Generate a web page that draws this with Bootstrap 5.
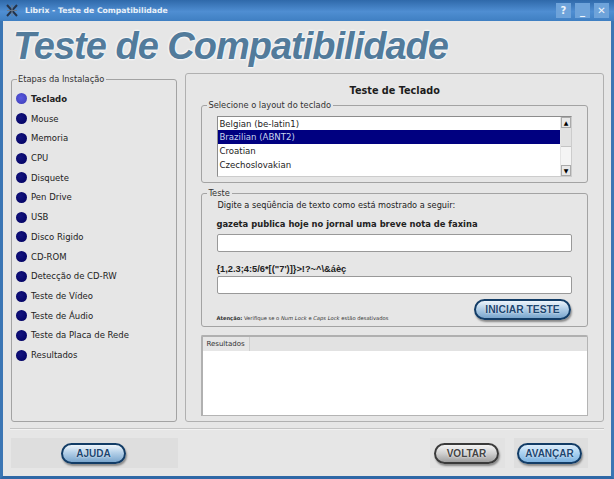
<!DOCTYPE html>
<html lang="pt">
<head>
    <meta charset="UTF-8">
    <meta name="viewport" content="width=device-width, initial-scale=1.0">
    <title>Librix - Teste de Compatibilidade</title>
    <link href="https://cdn.jsdelivr.net/npm/bootstrap@5.3.0/dist/css/bootstrap.min.css" rel="stylesheet">
    <style>
        html, body { height: 100%; }
        body {
            background: #e6e6e6;
            color: #222;
            font-family: "DejaVu Sans", sans-serif;
            font-size: 8.2px;
            line-height: 12px;
            overflow: hidden;
        }
        .janela {
            width: 614px;
            height: 479px;
            border: solid #3b76b4;
            border-width: 0 3px 3px 3px;
            border-bottom-color: #2f68a6;
        }
        .barra {
            height: 21px;
            margin: 0 -3px;
            padding: 0 5px 0 6px;
            background: linear-gradient(#2f69aa, #4f8ed2 55%, #3f7fc2);
            color: #e8f0f8;
            font-weight: bold;
            font-size: 7.7px;
        }
        .barra-nome { margin-left: 7px; }
        .btn-janela {
            width: 15px;
            height: 15px;
            background: #6ea3da;
            color: #eef4fb;
            font-size: 10px;
            font-weight: bold;
        }
        .titulo {
            height: 52px;
            margin: 0;
            padding: 2px 0 0 10px;
            font-family: "Liberation Sans", sans-serif;
            font-size: 38px;
            line-height: 46px;
            letter-spacing: -1px;
            font-weight: bold;
            font-style: italic;
            color: #527b9b;
            text-shadow: 0 0 2px #fff, 0 0 2px #fff, 0 0 3px #f4f8fb;
            white-space: nowrap;
        }
        .corpo { height: 349px; padding: 0 7px 0 8px; gap: 8px; }
        .grupo {
            border: 1px solid #a3a3a3;
            border-radius: 3px;
            margin: 0;
            min-width: 0;
        }
        .grupo > legend {
            float: none;
            width: auto;
            font-size: 8.3px;
            line-height: 12px;
            margin: 0 0 0 5px;
            padding: 0 2px 0 1px;
            background: #e6e6e6;
            color: #333;
        }
        .etapas { width: 167px; height: 349px; padding: 0; }
        .etapas > legend { margin-bottom: 4px; }
        .etapa { height: 19.72px; padding-left: 4px; gap: 4px; font-size: 8.5px; }
        .ponto {
            width: 11px;
            height: 11px;
            border-radius: 50%;
            background: radial-gradient(circle at 40% 40%, #14147e, #000060);
        }
        .ponto-ativo { background: radial-gradient(circle at 45% 45%, #5a5ae0, #3c3cb4); }
        .painel {
            width: 420px;
            border: 1px solid #b0b0b0;
            border-radius: 3px;
            padding: 0 15px;
        }
        .painel-titulo {
            height: 25px;
            padding-top: 10px;
            font-size: 9.7px;
            line-height: 14px;
            font-weight: bold;
            color: #1c1c1c;
            margin: 0;
            text-align: center;
        }
        .grupo-layout { height: 84px; padding: 0 15px; }
        .grupo-layout > legend, .grupo-teste > legend { margin-left: -10px; }
        .lista {
            height: 61px;
            margin-top: 5px;
            background: #fff;
            border: 1px solid #8c8c8c;
            border-right-color: #ccc;
            border-bottom-color: #ccc;
            font-size: 8.6px;
        }
        .lista-item { height: 14px; line-height: 14px; padding: 0 1px; }
        .lista-item:first-child { height: 13px; }
        .lista-sel { background: #000080; color: #c9d4ee; }
        .rolagem { width: 11px; background: #f4f4f4; border-left: 1px solid #e4e4e4; }
        .seta {
            height: 11px;
            background: #e8e8e8;
            border: 1px solid #aaa;
            font-size: 6px;
            line-height: 9px;
            text-align: center;
            color: #000;
        }
        .polegar { height: 19px; background: #e2e2e2; border-bottom: 1px solid #c4c4c4; }
        .grupo-teste { height: 140px; margin-top: 4px; padding: 0 15px; }
        .instrucao { height: 13px; margin: 0; }
        .frase { height: 22px; padding-top: 6px; margin: 0 0 0 -1px; font-weight: bold; font-size: 8.4px; }
        .frase-sinais {
            height: 24px;
            padding-top: 11px;
            font-family: "Liberation Sans", sans-serif;
            font-size: 9.3px;
        }
        .campo {
            height: 18px;
            background: #fff;
            border: 1px solid #999;
            border-radius: 2px;
        }
        .aviso { font-size: 5.2px; color: #333; margin-left: -1px; }
        .rodape-teste { height: 30px; }
        .resultados {
            height: 81px;
            margin-top: 8px;
            border: 1px solid #b4b4b4;
            border-left: 2px solid #b0b0b0;
            border-top: 2px solid #b0b0b0;
            border-radius: 2px 2px 0 0;
            background: #fff;
        }
        .aba-linha { height: 14px; background: #e2e2e2; }
        .aba {
            width: 47px;
            height: 14px;
            background: #e6e6e6;
            border-right: 1px solid #cfcfcf;
            padding-left: 3px;
            font-size: 7px;
            line-height: 14px;
            color: #333;
        }
        .separador { height: 2px; margin: 6px 7px 0 7px; background: #c4c4c4; border-bottom: 1px solid #f2f2f2; }
        .rodape { height: 46px; padding: 0 7px; }
        .foco { background: #dedede; height: 30px; }
        .foco-ajuda { width: 167px; margin-left: 1px; padding-left: 50px; }
        .foco-voltar { background: #e2e2e2; padding: 0 6px 0 4px; }
        .foco-avancar { width: 74px; padding-left: 3px; margin-left: 9px; margin-right: 16px; }
        .pilula {
            height: 21px;
            border: 2px solid #123c66;
            border-radius: 11px;
            padding: 0;
            color: #1d4670;
            font-family: "Liberation Sans", sans-serif;
            font-size: 10px;
            font-weight: bold;
            line-height: 17px;
            text-align: center;
            text-shadow: 0 0 2px #fff;
            background: linear-gradient(#eef5fb, #b4d0e8 45%, #7aa6cd);
            box-shadow: 1px 2px 2px #8a8a8a;
        }
        .pilula-ajuda { width: 65px; }
        .pilula-iniciar { width: 97px; margin: 5px 1px 0 0; font-size: 10.3px; }
        .pilula-voltar {
            width: 65px;
            border-color: #3a3a3a;
            color: #444;
            background: linear-gradient(#f4f4f4, #cfcfcf 50%, #9e9e9e);
        }
        .pilula-avancar { width: 65px; background: linear-gradient(#dcedfb, #a8d0f0 50%, #7db2e0); }
    </style>
</head>
<body>
    <div class="janela d-flex flex-column">
        <div class="barra d-flex align-items-center">
            <svg width="12" height="13" viewBox="0 0 12 13"><path d="M1 1L11 12M11 1L1 12" stroke="#26344a" stroke-width="2"/><path d="M6 1V12M1 6.5H11" stroke="#6b7a8c" stroke-width="1"/></svg>
            <span class="barra-nome flex-grow-1">Librix - Teste de Compatibilidade</span>
            <div class="d-flex gap-1">
                <span class="btn-janela d-flex align-items-center justify-content-center">?</span>
                <span class="btn-janela d-flex align-items-center justify-content-center">_</span>
                <span class="btn-janela d-flex align-items-center justify-content-center">✕</span>
            </div>
        </div>
        <h1 class="titulo">Teste de Compatibilidade</h1>
        <div class="corpo d-flex">
            <fieldset class="grupo etapas">
                <legend>Etapas da Instalação</legend>
                <div class="etapa d-flex align-items-center fw-bold"><span class="ponto ponto-ativo"></span>Teclado</div>
                <div class="etapa d-flex align-items-center"><span class="ponto"></span>Mouse</div>
                <div class="etapa d-flex align-items-center"><span class="ponto"></span>Memoria</div>
                <div class="etapa d-flex align-items-center"><span class="ponto"></span>CPU</div>
                <div class="etapa d-flex align-items-center"><span class="ponto"></span>Disquete</div>
                <div class="etapa d-flex align-items-center"><span class="ponto"></span>Pen Drive</div>
                <div class="etapa d-flex align-items-center"><span class="ponto"></span>USB</div>
                <div class="etapa d-flex align-items-center"><span class="ponto"></span>Disco Rigido</div>
                <div class="etapa d-flex align-items-center"><span class="ponto"></span>CD-ROM</div>
                <div class="etapa d-flex align-items-center"><span class="ponto"></span>Detecção de CD-RW</div>
                <div class="etapa d-flex align-items-center"><span class="ponto"></span>Teste de Vídeo</div>
                <div class="etapa d-flex align-items-center"><span class="ponto"></span>Teste de Áudio</div>
                <div class="etapa d-flex align-items-center"><span class="ponto"></span>Teste da Placa de Rede</div>
                <div class="etapa d-flex align-items-center"><span class="ponto"></span>Resultados</div>
            </fieldset>
            <div class="painel">
                <h2 class="painel-titulo">Teste de Teclado</h2>
                <fieldset class="grupo grupo-layout">
                    <legend>Selecione o layout do teclado</legend>
                    <div class="lista d-flex">
                        <div class="flex-grow-1">
                            <div class="lista-item">Belgian (be-latin1)</div>
                            <div class="lista-item lista-sel">Brazilian (ABNT2)</div>
                            <div class="lista-item">Croatian</div>
                            <div class="lista-item">Czechoslovakian</div>
                        </div>
                        <div class="rolagem d-flex flex-column">
                            <div class="seta">▲</div>
                            <div class="polegar"></div>
                            <div class="flex-grow-1"></div>
                            <div class="seta">▼</div>
                        </div>
                    </div>
                </fieldset>
                <fieldset class="grupo grupo-teste">
                    <legend>Teste</legend>
                    <p class="instrucao">Digite a seqüência de texto como está mostrado a seguir:</p>
                    <p class="frase">gazeta publica hoje no jornal uma breve nota de faxina</p>
                    <div class="campo"></div>
                    <p class="frase frase-sinais">{1,2.3;4:5/6*[("7')]}&gt;!?~^\&amp;áèç</p>
                    <div class="campo"></div>
                    <div class="rodape-teste d-flex align-items-end justify-content-between">
                        <span class="aviso"><b>Atenção:</b> Verifique se o <i>Num Lock</i> e <i>Caps Lock</i> estão desativados</span>
                        <button type="button" class="pilula pilula-iniciar align-self-start">INICIAR TESTE</button>
                    </div>
                </fieldset>
                <div class="resultados">
                    <div class="aba-linha"><div class="aba">Resultados</div></div>
                </div>
            </div>
        </div>
        <div class="separador"></div>
        <div class="rodape d-flex align-items-center">
            <div class="foco foco-ajuda d-flex align-items-center">
                <button type="button" class="pilula pilula-ajuda">AJUDA</button>
            </div>
            <div class="ms-auto d-flex align-items-center">
                <div class="foco foco-voltar d-flex align-items-center">
                    <button type="button" class="pilula pilula-voltar">VOLTAR</button>
                </div>
                <div class="foco foco-avancar d-flex align-items-center">
                    <button type="button" class="pilula pilula-avancar">AVANÇAR</button>
                </div>
            </div>
        </div>
    </div>
    <script src="https://cdn.jsdelivr.net/npm/bootstrap@5.3.0/dist/js/bootstrap.bundle.min.js"></script>
</body>
</html>
